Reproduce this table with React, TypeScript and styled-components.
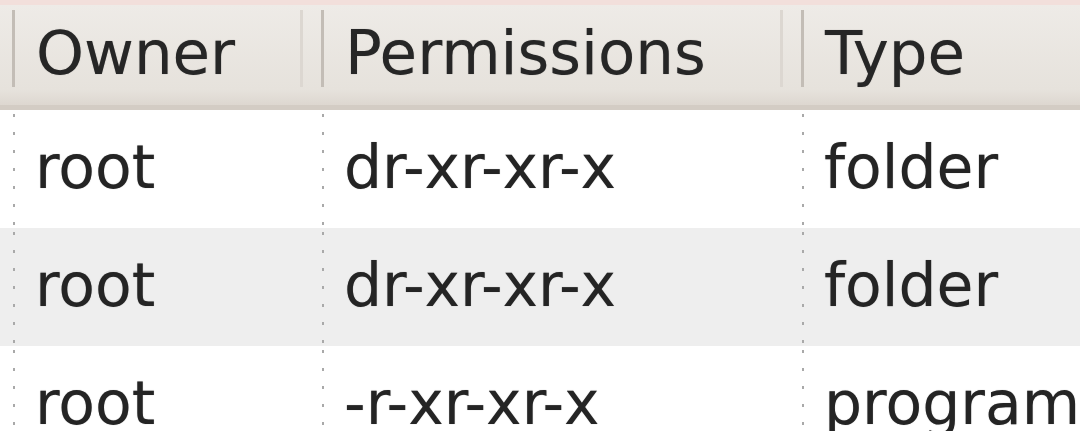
import React from "react";
import styled, { createGlobalStyle } from "styled-components";

const columns = ["Owner", "Permissions", "Type"];

const files = [
  { owner: "root", permissions: "dr-xr-xr-x", type: "folder" },
  { owner: "root", permissions: "dr-xr-xr-x", type: "folder" },
  { owner: "root", permissions: "-r-xr-xr-x", type: "program" },
];

const GlobalStyle = createGlobalStyle`
  html, body {
    margin: 0;
    padding: 0;
    background: #ffffff;
    overflow: hidden;
  }
  body {
    font-family: "DejaVu Sans", "Liberation Sans", sans-serif;
  }
`;

const Window = styled.div`
  width: 1080px;
  height: 431px;
  overflow: hidden;
  display: flex;
  flex-direction: column;
`;

const TopEdge = styled.div`
  height: 5px;
  flex: none;
  background: #f2dfdb;
`;

const GRID = "309px 480px 1fr";

const HeaderBar = styled.div`
  flex: none;
  box-sizing: border-box;
  height: 105px;
  display: grid;
  grid-template-columns: ${GRID};
  padding-left: 12px;
  background: linear-gradient(#eeebe7, #e6e2dc 85%, #ddd7d0);
  border-bottom: 5px solid #d3ccc4;
`;

const HeaderCell = styled.div<{ $last?: boolean }>`
  position: relative;
  display: flex;
  align-items: center;
  padding-left: 24px;
  padding-bottom: 6px;
  font-size: 61px;
  color: #262626;
  text-shadow: 0 0 1px rgba(0, 0, 0, 0.35);
  white-space: nowrap;
  overflow: hidden;

  &::before {
    content: "";
    position: absolute;
    left: 0;
    top: 5px;
    bottom: 18px;
    width: 3px;
    background: #c3bdb6;
  }

  &::after {
    content: "";
    display: ${(p) => (p.$last ? "none" : "block")};
    position: absolute;
    right: 18px;
    top: 5px;
    bottom: 18px;
    width: 3px;
    background: #dcd7d1;
  }
`;

const Row = styled.div<{ $alt: boolean }>`
  flex: none;
  height: 118px;
  display: grid;
  grid-template-columns: ${GRID};
  padding-left: 12px;
  background: ${(p) => (p.$alt ? "#eeeeee" : "#ffffff")};
`;

const Cell = styled.div`
  display: flex;
  align-items: center;
  padding-left: 23px;
  padding-bottom: 4px;
  font-size: 60px;
  color: #242424;
  text-shadow: 0 0 1px rgba(0, 0, 0, 0.35);
  white-space: nowrap;
  overflow: hidden;
  background-image: linear-gradient(#a9a9a9 0 3px, transparent 3px);
  background-size: 2px 18px;
  background-repeat: repeat-y;
  background-position: 1px 4px;
`;

export default function App() {
  return (
    <Window>
      <GlobalStyle />
      <TopEdge />
      <HeaderBar>
        {columns.map((c, i) => (
          <HeaderCell key={c} $last={i === columns.length - 1}>
            {c}
          </HeaderCell>
        ))}
      </HeaderBar>
      {files.map((f, i) => (
        <Row key={i} $alt={i % 2 === 1}>
          <Cell>{f.owner}</Cell>
          <Cell>{f.permissions}</Cell>
          <Cell>{f.type}</Cell>
        </Row>
      ))}
    </Window>
  );
}
